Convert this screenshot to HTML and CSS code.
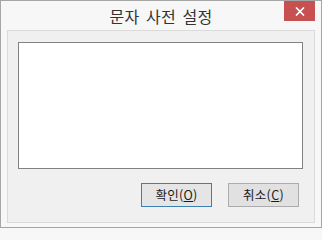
FILE: index.html
```html
<!DOCTYPE html>
<html lang="ko">
<head>
<meta charset="utf-8">
<link rel="stylesheet" href="styles.css">
</head>
<body>
<div class="window">
  <div class="titlebar">
    <span class="spacer"></span>
    <span class="title">문자 사전 설정</span>
    <span class="caption">
      <span class="close" aria-label="닫기">
        <svg width="10" height="9" viewBox="0 0 10 9"><path d="M1 0.5 L9 8.5 M9 0.5 L1 8.5" stroke="#fff" stroke-width="1.7" fill="none"/></svg>
      </span>
    </span>
  </div>
  <div class="client">
    <div class="listbox"></div>
    <div class="buttons">
      <button class="btn default">확인(<u>O</u>)</button>
      <button class="btn">취소(<u>C</u>)</button>
    </div>
  </div>
</div>
</body>
</html>
```
FILE: styles.css
```css
html, body {
  margin: 0;
  padding: 0;
  background: #f7f7f7;
}
.window {
  width: 322px;
  height: 228px;
  box-sizing: border-box;
  border: 1px solid #a6a6a6;
  background: #f7f7f7;
  padding: 0 6px 4px 6px;
  display: flex;
  flex-direction: column;
  font-family: "Noto Sans CJK KR", "Noto Sans", sans-serif;
}
.titlebar {
  height: 29px;
  display: grid;
  grid-template-columns: 1fr auto 1fr;
  align-items: start;
}
.title {
  font-size: 16px;
  line-height: 30px;
  color: #333333;
  letter-spacing: 0.2px;
  word-spacing: 2px;
}
.caption {
  display: flex;
  justify-content: flex-end;
}
.close {
  width: 31px;
  height: 20px;
  background: #c75050;
  display: flex;
  align-items: center;
  justify-content: center;
}
.client {
  flex: 1;
  background: #f0f0f0;
  border: 1px solid #dadada;
  display: flex;
  flex-direction: column;
  padding: 11px 15px 0 10px;
}
.listbox {
  width: 285px;
  height: 127px;
  box-sizing: border-box;
  background: #ffffff;
  border: 1px solid #828282;
}
.buttons {
  margin-top: 14px;
  display: flex;
  justify-content: flex-end;
  gap: 16px;
}
.btn {
  width: 71px;
  height: 24px;
  box-sizing: border-box;
  margin: 0;
  padding: 0;
  border: 1px solid #acacac;
  background: #e1e1e1;
  font-family: "Noto Sans CJK KR", "Noto Sans", sans-serif;
  font-size: 12.5px;
  letter-spacing: 0.3px;
  color: #1a1a1a;
  line-height: 20px;
}
.btn.default {
  border-color: #3c7fb1;
  background: #e5e5e5;
}
.btn u {
  text-decoration-thickness: 1px;
  text-underline-offset: 1px;
}
```
